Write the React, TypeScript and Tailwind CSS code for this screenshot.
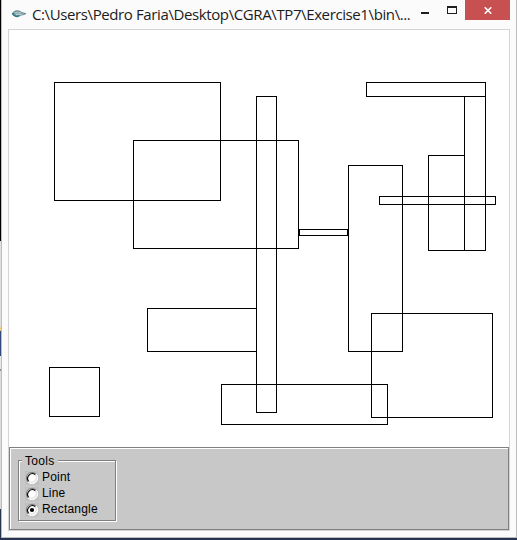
const shapes = [
  { x1: 54, y1: 82, x2: 220, y2: 200 },
  { x1: 133, y1: 140, x2: 298, y2: 248 },
  { x1: 256, y1: 96, x2: 276, y2: 412 },
  { x1: 299, y1: 229, x2: 347, y2: 235 },
  { x1: 348, y1: 165, x2: 402, y2: 351 },
  { x1: 366, y1: 82, x2: 485, y2: 96 },
  { x1: 464, y1: 96, x2: 485, y2: 250 },
  { x1: 428, y1: 155, x2: 464, y2: 250 },
  { x1: 379, y1: 196, x2: 495, y2: 204 },
  { x1: 371, y1: 313, x2: 492, y2: 417 },
  { x1: 221, y1: 384, x2: 387, y2: 424 },
  { x1: 147, y1: 308, x2: 256, y2: 351 },
  { x1: 49, y1: 367, x2: 99, y2: 416 },
];

function TitleBar() {
  return (
    <header className="flex h-[29px] shrink-0 items-start pl-[9px]">
      <svg className="mt-[8px] h-3 w-4 shrink-0" viewBox="0 0 16 12">
        <path d="M1 5.5C2 2 8 1.5 11 4.2L15 5.3L14.5 6.8L10.5 7.5C7 9.5 2 9 1 5.5Z" fill="#7b9ca5" />
        <path d="M1.5 5C2 8.5 6 9 8.5 7.7" fill="none" stroke="#267784" strokeWidth="1.5" />
        <path d="M4 5.2C6 3 9 4 13.5 6M5 6.2L10.5 6.3" fill="none" stroke="#dfe9eb" strokeWidth="0.9" />
        <path d="M4 3.2C7 2.4 9.5 3.3 11 5L14.5 5.6" fill="none" stroke="#557982" strokeWidth="0.8" />
      </svg>
      <h1 className="ml-[5px] w-[384px] shrink-0 whitespace-nowrap font-['Open_Sans',sans-serif] text-[15px] leading-[29px] tracking-[-0.39px] text-[#1c1c1c]">
        C:\Users\Pedro Faria\Desktop\CGRA\TP7\Exercise1\bin\...
      </h1>
      <span className="ml-[5px] mt-[12px] h-[2px] w-[8px] shrink-0 bg-[#1e1e1e]" />
      <span className="ml-[18px] mt-[6px] h-[8px] w-[10px] shrink-0 border border-t-2 border-[#1e1e1e]" />
      <button className="ml-[8px] flex h-5 w-[45px] shrink-0 items-center justify-center bg-[#c75050]">
        <svg className="mt-[1px] h-[7px] w-[8px]" viewBox="0 0 8 7">
          <path d="M0.7 0.3L7.3 6.7M7.3 0.3L0.7 6.7" stroke="#fff" strokeWidth="1.6" />
        </svg>
      </button>
    </header>
  );
}

function Radio({ label, checked = false }: { label: string; checked?: boolean }) {
  return (
    <label className="flex h-4 items-center">
      <svg className="h-[14px] w-[14px] shrink-0 bg-[#c0c0c0]" viewBox="0 0 14 14">
        <circle cx="7" cy="7" r="5.2" fill="#fff" />
        <path d="M3 11A5.6 5.6 0 0 1 11 3" fill="none" stroke="#808080" />
        <path d="M3.7 10.3A4.7 4.7 0 0 1 10.3 3.7" fill="none" stroke="#000" strokeWidth="1.1" />
        <path d="M11 3A5.6 5.6 0 0 1 3 11" fill="none" stroke="#fff" />
        <path d="M10.3 3.7A4.7 4.7 0 0 1 3.7 10.3" fill="none" stroke="#d0d0d0" strokeWidth="0.8" />
        {checked && <circle cx="7" cy="7" r="2.1" fill="#000" />}
      </svg>
      <span className="ml-[3px] -translate-y-px text-[12px] leading-4 tracking-[0.2px]">{label}</span>
    </label>
  );
}

function ToolsPanel() {
  return (
    <section className="flex h-[83px] shrink-0 border border-[#808080] bg-[#c8c8c8]">
      <div className="h-[81px] w-full border-l border-t border-white pl-[7px] pt-[11px]">
        <div className="relative h-[62px] w-[99px] text-black">
          <div className="h-[61px] w-[98px] border border-[#808080] shadow-[1px_1px_0_#fff,inset_1px_1px_0_#fff]" />
          <span className="absolute left-[4px] top-[-6px] bg-[#c8c8c8] pl-[3px] pr-[3px] text-[12px] leading-[14px] tracking-[0.3px]">Tools</span>
          <div className="absolute left-[7px] top-[10px] flex flex-col">
            <Radio label="Point" />
            <Radio label="Line" />
            <Radio label="Rectangle" checked />
          </div>
        </div>
      </div>
    </section>
  );
}

export default function App() {
  return (
    <div className="flex h-[540px] w-[517px] overflow-hidden bg-[#26344f] font-['Liberation_Sans',sans-serif]">
      <div className="flex w-px shrink-0 flex-col">
        <span className="h-[241px] bg-black" />
        <span className="h-[86px] bg-[#dedede]" />
        <span className="h-[4px] bg-[#ebce7c]" />
        <span className="h-[25px] bg-[#304a7a]" />
        <span className="h-[13px] bg-[#e8e8e8]" />
        <span className="h-[2px] bg-[#909090]" />
        <span className="h-[138px] bg-[#dcdcdc]" />
      </div>
      <div className="flex h-[538px] w-[516px] shrink-0 flex-col border border-t-0 border-[#bdbdbd] bg-[#fbfbfb]">
        <TitleBar />
        <main className="ml-[6px] flex h-[502px] w-[502px] shrink-0 flex-col border border-[#d4d4d4] bg-white">
          <svg className="h-[417px] w-[500px] shrink-0" viewBox="9 30 500 417" shapeRendering="crispEdges">
            {shapes.map((s) => (
              <rect
                key={`${s.x1}-${s.y1}`}
                x={s.x1 + 0.5}
                y={s.y1 + 0.5}
                width={s.x2 - s.x1}
                height={s.y2 - s.y1}
                fill="none"
                stroke="#000"
              />
            ))}
          </svg>
          <ToolsPanel />
        </main>
      </div>
    </div>
  );
}
